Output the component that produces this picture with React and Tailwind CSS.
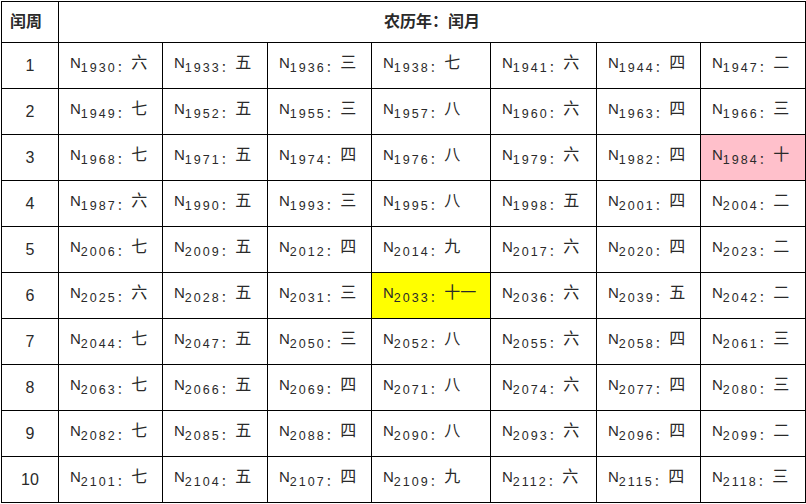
const rows = [
  [["1930", "六"], ["1933", "五"], ["1936", "三"], ["1938", "七"], ["1941", "六"], ["1944", "四"], ["1947", "二"]],
  [["1949", "七"], ["1952", "五"], ["1955", "三"], ["1957", "八"], ["1960", "六"], ["1963", "四"], ["1966", "三"]],
  [["1968", "七"], ["1971", "五"], ["1974", "四"], ["1976", "八"], ["1979", "六"], ["1982", "四"], ["1984", "十", "pink"]],
  [["1987", "六"], ["1990", "五"], ["1993", "三"], ["1995", "八"], ["1998", "五"], ["2001", "四"], ["2004", "二"]],
  [["2006", "七"], ["2009", "五"], ["2012", "四"], ["2014", "九"], ["2017", "六"], ["2020", "四"], ["2023", "二"]],
  [["2025", "六"], ["2028", "五"], ["2031", "三"], ["2033", "十一", "yellow"], ["2036", "六"], ["2039", "五"], ["2042", "二"]],
  [["2044", "七"], ["2047", "五"], ["2050", "三"], ["2052", "八"], ["2055", "六"], ["2058", "四"], ["2061", "三"]],
  [["2063", "七"], ["2066", "五"], ["2069", "四"], ["2071", "八"], ["2074", "六"], ["2077", "四"], ["2080", "三"]],
  [["2082", "七"], ["2085", "五"], ["2088", "四"], ["2090", "八"], ["2093", "六"], ["2096", "四"], ["2099", "二"]],
  [["2101", "七"], ["2104", "五"], ["2107", "四"], ["2109", "九"], ["2112", "六"], ["2115", "四"], ["2118", "三"]],
];

const bg = { pink: "bg-[#ffc0cb]", yellow: "bg-[#ffff00]" };

const App = () => {
  return (
    <div className="bg-white w-[806px] h-[504px] overflow-hidden pt-px pl-px">
      <table
        className="table-fixed border-collapse text-[#2a2a2a] text-[16px] font-['Liberation_Sans','Noto_Sans_CJK_SC',sans-serif]"
        style={{ width: 805 }}
      >
        <colgroup>
          <col className="w-[57px]" />
          <col className="w-[104px]" />
          <col className="w-[105px]" />
          <col className="w-[104px]" />
          <col className="w-[119px]" />
          <col className="w-[106px]" />
          <col className="w-[104px]" />
          <col className="w-[105px]" />
        </colgroup>
        <thead>
          <tr className="h-[41px]">
            <th className="border border-black text-left px-[8px] font-bold">闰周</th>
            <th colSpan={7} className="border border-black text-center font-bold">
              农历年：闰月
            </th>
          </tr>
        </thead>
        <tbody>
          {rows.map((row, i) => (
            <tr key={i} className="h-[46px]">
              <td className="border border-black text-center">{i + 1}</td>
              {row.map(([year, month, color]) => (
                <td
                  key={year}
                  className={`border border-black px-[11px] pb-[5px] leading-[20px] whitespace-nowrap ${color ? bg[color] : ""}`}
                >
                  <span className="text-[15px]">N</span>
                  <span className="relative top-[4px] text-[12.5px] tracking-[2px] leading-none">
                    {year}：
                  </span>
                  <span className="text-[16px]">{month}</span>
                </td>
              ))}
            </tr>
          ))}
        </tbody>
      </table>
    </div>
  );
};

export default App;
